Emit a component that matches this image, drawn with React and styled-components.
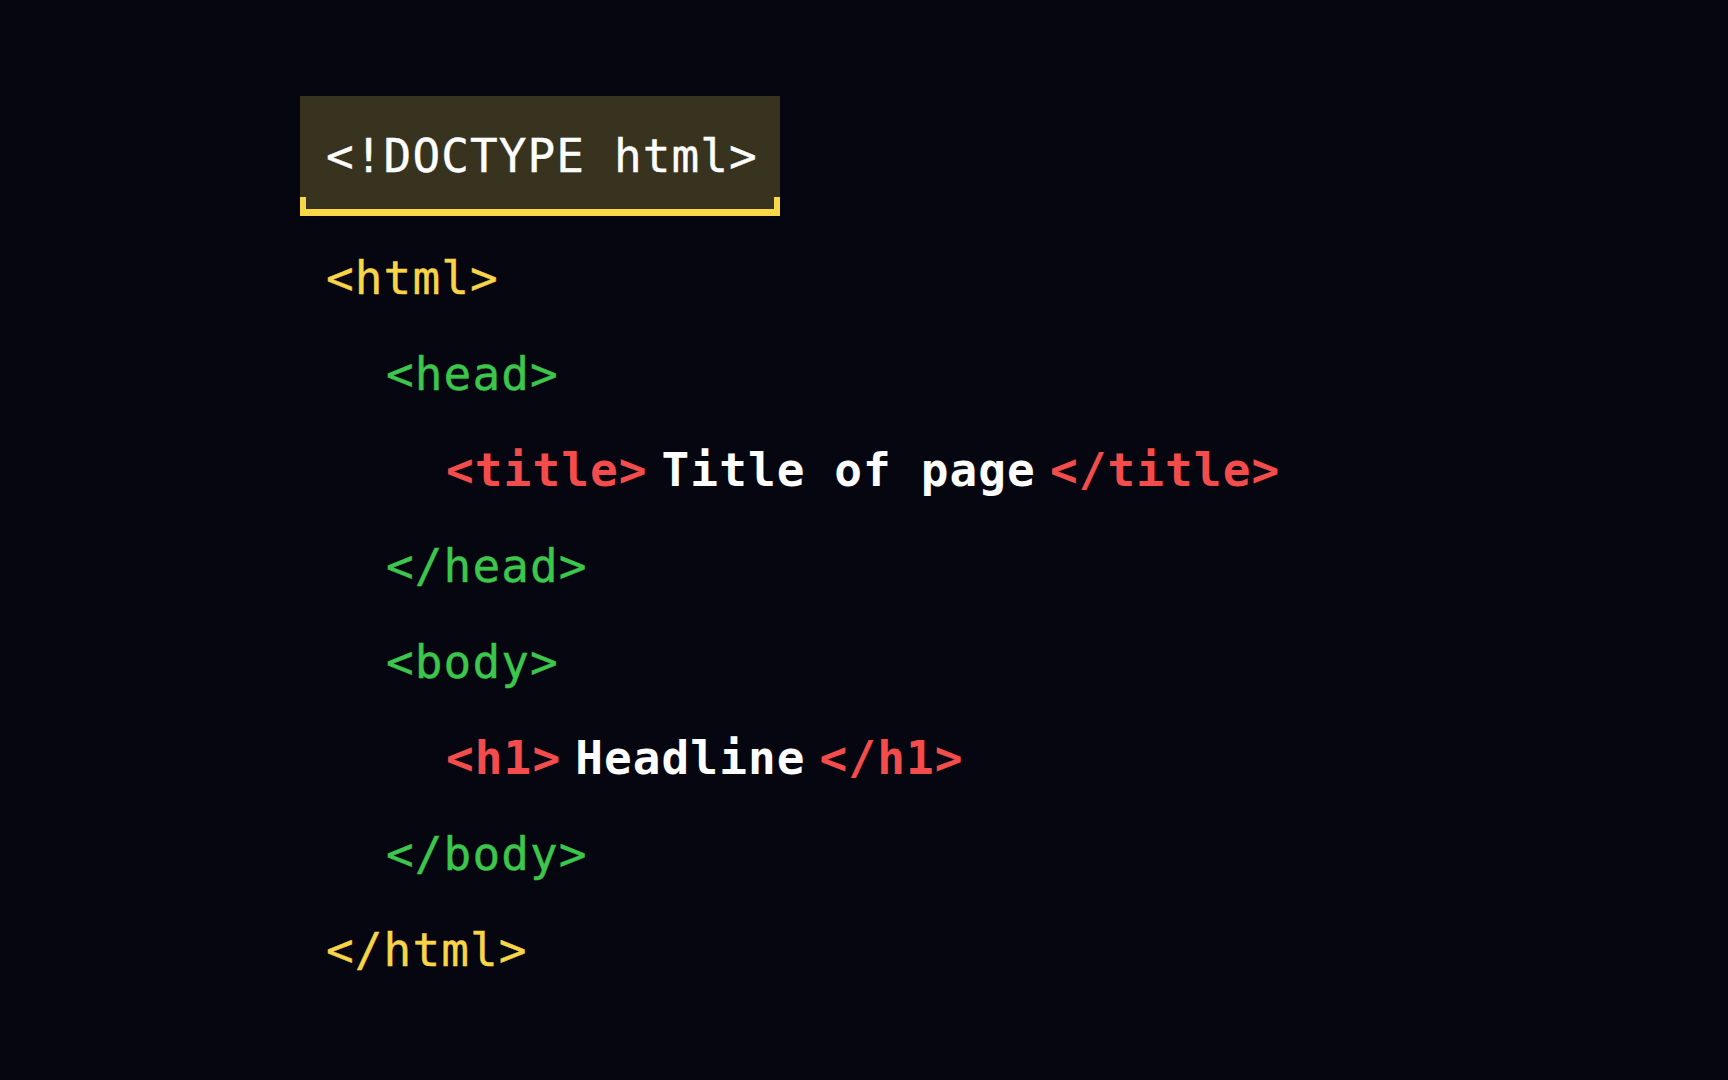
import React from "react";
import styled, { createGlobalStyle } from "styled-components";

const GlobalStyle = createGlobalStyle`
  html, body {
    margin: 0;
    padding: 0;
    background: #05060f;
  }
  body {
    font-family: "DejaVu Sans Mono", "Liberation Mono", monospace;
  }
`;

const Page = styled.main`
  min-height: 100vh;
  box-sizing: border-box;
  padding: 96px 0 0 300px;
  background: #05060f;
  font-family: "DejaVu Sans Mono", "Liberation Mono", monospace;
  font-size: 46px;
  letter-spacing: 1.1px;
`;

const DoctypeBox = styled.div`
  position: relative;
  display: inline-flex;
  align-items: center;
  box-sizing: border-box;
  height: 120px;
  padding: 0 22px 0 26px;
  background: #38331e;
  color: #ffffff;
  -webkit-text-stroke: 0.4px currentColor;
  &::after {
    content: "";
    position: absolute;
    left: 0;
    right: 0;
    bottom: 0;
    height: 19px;
    box-sizing: border-box;
    border: 6px solid #f8d748;
    border-top: none;
    border-bottom-width: 7px;
  }
`;

const CodeBlock = styled.div`
  margin-top: 14px;
  display: flex;
  flex-direction: column;
`;

const Line = styled.div`
  display: flex;
  align-items: center;
  gap: 14px;
  height: 96px;
  padding-left: ${(p) => 26 + p.$depth * 60}px;
  font-weight: ${(p) => (p.$bold ? 700 : 400)};
  -webkit-text-stroke: ${(p) => (p.$bold ? "0" : "0.4px currentColor")};
  white-space: pre;
`;

const colors = {
  yellow: "#f8d548",
  green: "#3cc64b",
  red: "#f44c4c",
  white: "#ffffff",
};

const Tag = styled.span`
  color: ${(p) => colors[p.$tone]};
`;

const Content = styled.span`
  color: #ffffff;
`;

const lines = [
  { depth: 0, tone: "yellow", open: "<html>" },
  { depth: 1, tone: "green", open: "<head>" },
  { depth: 2, tone: "red", open: "<title>", text: "Title of page", close: "</title>", bold: true },
  { depth: 1, tone: "green", open: "</head>" },
  { depth: 1, tone: "green", open: "<body>" },
  { depth: 2, tone: "red", open: "<h1>", text: "Headline", close: "</h1>", bold: true },
  { depth: 1, tone: "green", open: "</body>" },
  { depth: 0, tone: "yellow", open: "</html>" },
];

export default function App() {
  return (
    <>
      <GlobalStyle />
      <Page>
        <DoctypeBox>{"<!DOCTYPE html>"}</DoctypeBox>
        <CodeBlock>
          {lines.map((l, i) => (
            <Line key={i} $depth={l.depth} $bold={l.bold}>
              <Tag $tone={l.tone}>{l.open}</Tag>
              {l.text && <Content>{l.text}</Content>}
              {l.close && <Tag $tone={l.tone}>{l.close}</Tag>}
            </Line>
          ))}
        </CodeBlock>
      </Page>
    </>
  );
}
